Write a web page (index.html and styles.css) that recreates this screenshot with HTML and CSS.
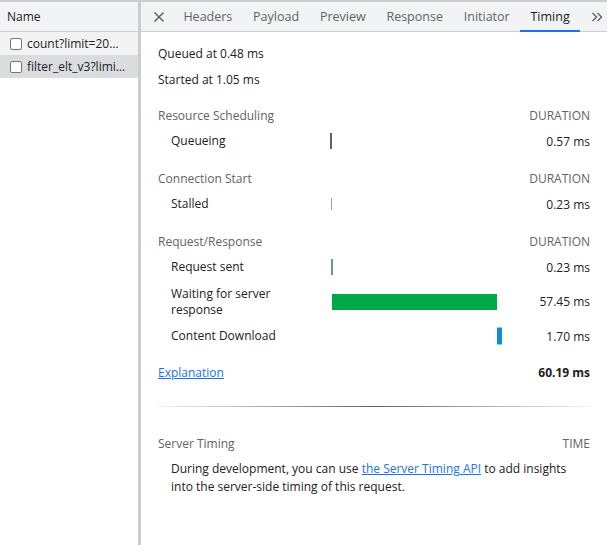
FILE: index.html
```html
<!DOCTYPE html>
<html>
<head>
<meta charset="utf-8">
<link rel="stylesheet" href="styles.css">
</head>
<body>
<div class="app">
  <aside class="list">
    <div class="list-head">Name</div>
    <div class="req"><span class="cb"></span><span class="req-name">count?limit=20…</span></div>
    <div class="req sel"><span class="cb"></span><span class="req-name">filter_elt_v3?limi…</span></div>
  </aside>
  <main class="detail">
    <nav class="tabs">
      <span class="close"><svg width="12" height="12" viewBox="0 0 12 12"><path d="M1.5 1.5 L10.5 10.5 M10.5 1.5 L1.5 10.5" stroke="#5f6368" stroke-width="1.5"/></svg></span>
      <span class="tab">Headers</span>
      <span class="tab">Payload</span>
      <span class="tab">Preview</span>
      <span class="tab">Response</span>
      <span class="tab">Initiator</span>
      <span class="tab active">Timing</span>
      <span class="more"><svg width="12" height="10" viewBox="0 0 12 10"><path d="M1.5 1 L5.5 5 L1.5 9 M6.5 1 L10.5 5 L6.5 9" fill="none" stroke="#5f6368" stroke-width="1.4"/></svg></span>
    </nav>
    <section class="timing">
      <div class="line">Queued at 0.48 ms</div>
      <div class="line">Started at 1.05 ms</div>

      <div class="grid">
        <div class="hdr gap first">Resource Scheduling</div><div class="hdr gap first"></div><div class="hdr gap first right">DURATION</div>
        <div class="lbl">Queueing</div><div class="bar"><span class="b queue" style="left:-1px;width:2px"></span></div><div class="val">0.57 ms</div>

        <div class="hdr gap">Connection Start</div><div class="hdr gap"></div><div class="hdr gap right">DURATION</div>
        <div class="lbl">Stalled</div><div class="bar"><span class="b stall" style="left:0;width:1px"></span></div><div class="val">0.23 ms</div>

        <div class="hdr gap">Request/Response</div><div class="hdr gap"></div><div class="hdr gap right">DURATION</div>
        <div class="lbl">Request sent</div><div class="bar"><span class="b sent" style="left:0;width:2px"></span></div><div class="val">0.23 ms</div>
        <div class="lbl tall">Waiting for server response</div><div class="bar tall"><span class="b wait" style="left:1px;width:165px"></span></div><div class="val tall">57.45 ms</div>
        <div class="lbl">Content Download</div><div class="bar"><span class="b dl" style="left:166px;width:5px"></span></div><div class="val">1.70 ms</div>

        <div class="foot gap last"><a href="#">Explanation</a></div><div class="foot gap last"></div><div class="foot gap last right total">60.19 ms</div>
      </div>

      <div class="sep"></div>

      <div class="srv-head"><span>Server Timing</span><span>TIME</span></div>
      <p class="srv-text">During development, you can use <a href="#">the Server Timing API</a> to add insights into the server-side timing of this request.</p>
    </section>
  </main>
</div>
</body>
</html>
```

FILE: styles.css
```css
* { box-sizing: border-box; }
html, body { margin: 0; padding: 0; background: #fff; }
body {
  font-family: "Open Sans", "Noto Sans", sans-serif;
  font-size: 12px;
  color: #202124;
  width: 607px;
  height: 545px;
  overflow: hidden;
}
.app {
  display: flex;
  height: 545px;
  border-top: 2px solid #cbcdd1;
}
.list {
  width: 141px;
  flex: none;
  border-right: 3px solid #cbcdd1;
  background: #fff;
}
.list-head {
  height: 30px;
  display: flex;
  align-items: center;
  padding-left: 7px;
  background: #f1f3f4;
  border-bottom: 1px solid #cbcdd1;
  color: #202124;
}
.req {
  height: 23px;
  display: flex;
  align-items: center;
  padding-left: 10px;
  padding-right: 6px;
  background: #f3f3f3;
  color: #202124;
  white-space: nowrap;
}
.req.sel { background: #dadce0; }
.cb {
  flex: none;
  width: 12px;
  height: 12px;
  border: 1px solid #767676;
  border-radius: 2px;
  background: #fff;
  margin-right: 5px;
}
.req-name {
  overflow: hidden;
  text-overflow: ellipsis;
  min-width: 0;
}
.detail { flex: 1; min-width: 0; }
.tabs {
  height: 30px;
  display: flex;
  align-items: stretch;
  background: #f1f3f4;
  border-bottom: 1px solid #cbcdd1;
  white-space: nowrap;
}
.close {
  display: flex;
  align-items: center;
  padding: 0 8px 0 12px;
}
.tab {
  display: flex;
  align-items: center;
  padding: 0 10.4px;
  color: #5f6368;
  font-size: 12.5px;
  border-bottom: 2px solid transparent;
  margin-bottom: -1px;
}
.tab.active {
  color: #202124;
  border-bottom-color: #1a73e8;
}
.more {
  display: flex;
  align-items: center;
  padding-left: 11px;
}
.timing { padding: 8px 17px 0 17px; }
.line { height: 26px; display: flex; align-items: center; }
.grid {
  display: grid;
  grid-template-columns: 173px 171px 1fr;
}
.grid > div { height: 26px; display: flex; align-items: center; }
.grid > .gap { margin-top: 11px; }
.grid > .gap.first { margin-top: 10px; }
.grid > .gap.last { margin-top: 10px; }
.grid > .tall { height: 43px; }
.hdr { color: #5f6368; }
.right { justify-content: flex-end; }
.lbl { padding-left: 13px; padding-right: 24px; line-height: 16px; }
.val { justify-content: flex-end; }
.bar { position: relative; }
.b {
  position: absolute;
  top: 50%;
  height: 16px;
  transform: translateY(-50%);
}
.b.queue { background: #5f6368; }
.b.stall { background: #9aa0a6; height: 12px; }
.b.sent { background: #6f9497; }
.b.wait { background: #00a846; }
.b.dl { background: #0f8ed6; height: 17px; }
a { color: #1a73e8; text-decoration: underline; }
.total { font-weight: 700; }
.sep {
  height: 1px;
  margin: 21px 0 23px 0;
  background: linear-gradient(to right, rgba(95,99,104,0.08), #5f6368 50%, rgba(95,99,104,0.08));
}
.srv-head {
  display: flex;
  justify-content: space-between;
  color: #5f6368;
  height: 26px;
  align-items: center;
}
.srv-text {
  margin: 4px 0 0 0;
  padding-left: 13px;
  line-height: 18px;
}
```
